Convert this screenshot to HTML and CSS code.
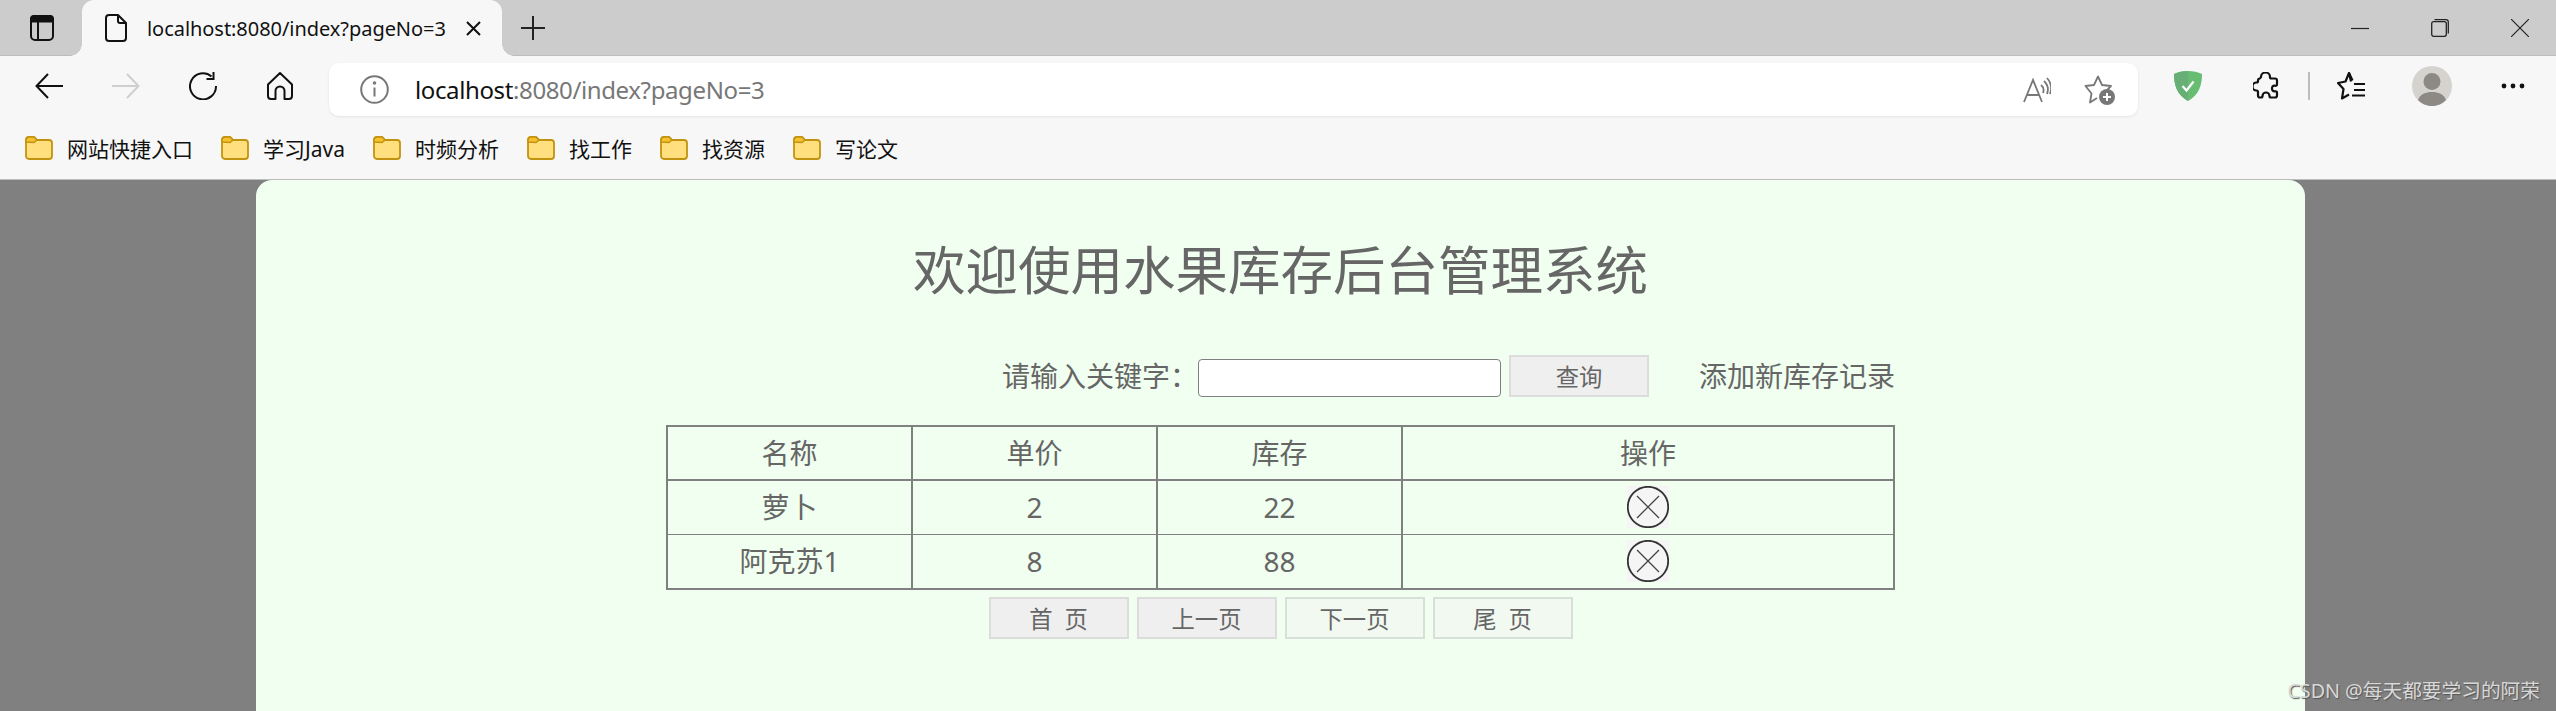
FILE: index.html
```html
<!DOCTYPE html>
<html lang="zh-CN">
<head>
<meta charset="utf-8">
<title>水果库存后台管理系统</title>
<link rel="stylesheet" href="styles.css">
</head>
<body>
<header class="tabstrip">
  <svg class="ic-sidebar" width="24" height="26" viewBox="0 0 24 26" fill="none" stroke="#111" stroke-width="2"><rect x="1" y="1" width="22" height="24" rx="4"/><path d="M1 6.500h22V4a3 3 0 0 0-3-3H4a3 3 0 0 0-3 3z" fill="#111"/><path d="M8 7v18"/></svg>
  <div class="tab">
    <svg class="ic-file" width="22" height="28" viewBox="0 0 22 28" fill="none" stroke="#111" stroke-width="2" stroke-linejoin="round"><path d="M4 1h9l8 8v15a3 3 0 0 1-3 3H4a3 3 0 0 1-3-3V4a3 3 0 0 1 3-3z"/><path d="M13 1v6a2 2 0 0 0 2 2h6"/></svg>
    <span class="tab-title">localhost:8080/index?pageNo=3</span>
    <svg class="ic-tabclose" width="15" height="15" viewBox="0 0 15 15" stroke="#111" stroke-width="2"><path d="M1 1l13 13M14 1L1 14"/></svg>
  </div>
  <svg class="ic-newtab" width="24" height="24" viewBox="0 0 24 24" stroke="#222" stroke-width="2"><path d="M12 0v24M0 12h24"/></svg>
  <div class="window-controls">
    <svg width="18" height="18" viewBox="0 0 18 18" stroke="#222" stroke-width="1.200"><path d="M0 9.500h18"/></svg>
    <svg width="18" height="18" viewBox="0 0 18 18" fill="none" stroke="#222" stroke-width="1.300"><rect x=".7" y="2.700" width="14.600" height="14.600" rx="2"/><path d="M3.500.7H15a2.300 2.300 0 0 1 2.300 2.300v11.500"/></svg>
    <svg width="18" height="18" viewBox="0 0 18 18" stroke="#222" stroke-width="1.200"><path d="M0 0l18 18M18 0L0 18"/></svg>
  </div>
</header>

<nav class="toolbar">
  <svg class="ic-back" width="28" height="26" viewBox="0 0 28 26" fill="none" stroke="#111" stroke-width="2"><path d="M28 13H2M13 1L1.500 13 13 25"/></svg>
  <svg class="ic-forward" width="28" height="26" viewBox="0 0 28 26" fill="none" stroke="#cfcfcf" stroke-width="2"><path d="M0 13h26M15 1l11.500 12L15 25"/></svg>
  <svg class="ic-reload" width="28" height="28" viewBox="0 0 28 28" fill="none" stroke="#111" stroke-width="2"><path d="M22.500 4.500A13 13 0 1 0 27 14"/><path d="M24.500 0v7h-7"/></svg>
  <svg class="ic-home" width="26" height="28" viewBox="0 0 26 28" fill="none" stroke="#111" stroke-width="2" stroke-linejoin="round"><path d="M13 1L1 12.500V24a3 3 0 0 0 3 3h4.500V19a4.500 4.500 0 0 1 9 0v8H22a3 3 0 0 0 3-3V12.500z"/></svg>
  <div class="addressbar">
    <svg class="ic-info" width="29" height="29" viewBox="0 0 29 29" fill="none" stroke="#777" stroke-width="2"><circle cx="14.500" cy="14.500" r="13.300"/><path d="M14.500 12.500v9"/><circle cx="14.500" cy="8" r=".8"/></svg>
    <span class="url"><span class="url-host">localhost</span>:8080/index?pageNo=3</span>
    <svg class="ic-read" width="28" height="26" viewBox="0 0 28 26" fill="none" stroke="#777" stroke-width="1.800"><path d="M1 25L10 3l9 22M4 18h12"/><path d="M18 8a7 7 0 0 1 2 8M21 4a12 12 0 0 1 3 13M24 1a16 16 0 0 1 3 16"/></svg>
    <svg class="ic-favadd" width="31" height="30" viewBox="0 0 31 30" fill="none" stroke="#777" stroke-width="1.800" stroke-linejoin="round"><path d="M23.500 14.500L27 11l-9-1-4-8.500L10 10l-8.500 1 6 7.500-1.500 9 7-4.500"/><circle cx="23" cy="22" r="8" fill="#777" stroke="none"/><path d="M23 18v8M19 22h8" stroke="#fff" stroke-width="2"/></svg>
  </div>
  <svg class="ic-shield" width="28" height="30" viewBox="0 0 28 30"><path d="M14 0c5 0 10 1 14 3 0 11-3 21-14 27C3 24 0 14 0 3c4-2 9-3 14-3z" fill="#67bd72"/><path d="M14 0C9 0 4 1 0 3c0 11 3 21 14 27z" fill="#68ae77"/><path d="M8.500 15l4 4.500 7-9" fill="none" stroke="#fff" stroke-width="2.200"/></svg>
  <svg class="ic-puzzle" width="26" height="29" viewBox="0 0 26 29" fill="none" stroke="#111" stroke-width="2.200" stroke-linejoin="round"><path d="M8 5a4.500 4.500 0 0 1 9 0c0 1 .5 1.500 1.500 1.500H22a2 2 0 0 1 2 2v4c0 1-1 1.500-2 1.200-2-.4-3 1-3 2.800s1 3 3 2.800c1-.2 2 .2 2 1.200v3a2 2 0 0 1-2 2h-4c-1 0-1.500-.6-1.500-1.500a3.500 3.500 0 0 0-7 0c0 1-.5 1.500-1.500 1.500H7a2 2 0 0 1-2-2v-3.500c0-1-.5-1.500-1.500-1.500a4 4 0 0 1 0-8c1 0 1.500-.5 1.500-1.500V8.500a2 2 0 0 1 2-2z"/></svg>
  <span class="toolbar-sep"></span>
  <svg class="ic-favs" width="28" height="28" viewBox="0 0 28 28" fill="none" stroke="#111" stroke-width="2.200" stroke-linejoin="round"><path d="M14 9.500L12 1 8.500 9.500 1 11l5.500 6L5 26.500l7-4"/><path d="M12 1l3.500 7.500M17 12h11M17 18h11M15 23.500h13"/></svg>
  <svg class="ic-avatar" width="40" height="40" viewBox="0 0 40 40"><circle cx="20" cy="20" r="20" fill="#d4d3cf"/><ellipse cx="20" cy="15.500" rx="8.500" ry="8.500" fill="#8d8984"/><path d="M6 34c2-6 8-8 14-8s12 2 14 8c-3.500 3.700-8.500 6-14 6S9.500 37.700 6 34z" fill="#8d8984"/></svg>
  <svg class="ic-more" width="24" height="6" viewBox="0 0 24 6" fill="#111"><circle cx="3" cy="3" r="2.400"/><circle cx="12" cy="3" r="2.400"/><circle cx="21" cy="3" r="2.400"/></svg>
</nav>

<nav class="bookmarks">
  <a class="bookmark bm-1"><svg class="folder" width="28" height="24" viewBox="0 0 28 24"><use href="#folder-shape"/></svg>网站快捷入口</a>
  <a class="bookmark bm-2"><svg class="folder" width="28" height="24" viewBox="0 0 28 24"><use href="#folder-shape"/></svg>学习Java</a>
  <a class="bookmark bm-3"><svg class="folder" width="28" height="24" viewBox="0 0 28 24"><use href="#folder-shape"/></svg>时频分析</a>
  <a class="bookmark bm-4"><svg class="folder" width="28" height="24" viewBox="0 0 28 24"><use href="#folder-shape"/></svg>找工作</a>
  <a class="bookmark bm-5"><svg class="folder" width="28" height="24" viewBox="0 0 28 24"><use href="#folder-shape"/></svg>找资源</a>
  <a class="bookmark bm-6"><svg class="folder" width="28" height="24" viewBox="0 0 28 24"><use href="#folder-shape"/></svg>写论文</a>
</nav>

<svg class="defs" width="0" height="0">
  <defs>
    <g id="folder-shape">
      <path d="M1 4a3 3 0 0 1 3-3h5l3 3h12a3 3 0 0 1 3 3v13a3 3 0 0 1-3 3H4a3 3 0 0 1-3-3z" fill="#ffdf7e" stroke="#c2930f" stroke-width="1.800"/>
      <path d="M1 6V4a3 3 0 0 1 3-3h5l3 3-3 2.500z" fill="#f4c02f" stroke="#c2930f" stroke-width="1.500"/>
    </g>
    <g id="delete-shape">
      <rect width="42" height="42" fill="#f4f5f4"/>
      <circle cx="21" cy="21" r="20.200" fill="none" stroke="#333" stroke-width="1.800"/>
      <path d="M10 10l22 22M32 10L10 32" stroke="#444" stroke-width="1.300"/>
    </g>
  </defs>
</svg>

<main class="page">
  <section class="card">
    <h1 class="title">欢迎使用水果库存后台管理系统</h1>
    <div class="content">
      <form class="search">
        <label class="search-label">请输入关键字：</label>
        <input class="search-input" type="text">
        <button class="btn btn-search" type="button">查询</button>
        <a class="add-link">添加新库存记录</a>
      </form>
      <table class="fruit-table">
        <colgroup><col class="col-n"><col class="col-n"><col class="col-n"><col></colgroup>
        <tr class="head-row"><th>名称</th><th>单价</th><th>库存</th><th>操作</th></tr>
        <tr class="row-first"><td>萝卜</td><td>2</td><td>22</td><td><svg class="ic-delete" width="42" height="42" viewBox="0 0 42 42"><use href="#delete-shape"/></svg></td></tr>
        <tr class="row-last"><td>阿克苏1</td><td>8</td><td>88</td><td><svg class="ic-delete" width="42" height="42" viewBox="0 0 42 42"><use href="#delete-shape"/></svg></td></tr>
      </table>
      <div class="pager">
        <button class="btn btn-page" type="button">首 页</button>
        <button class="btn btn-page" type="button">上一页</button>
        <button class="btn btn-page btn-light" type="button">下一页</button>
        <button class="btn btn-page btn-light" type="button">尾 页</button>
      </div>
    </div>
  </section>
  <span class="watermark">CSDN @每天都要学习的阿荣</span>
</main>
</body>
</html>
```
FILE: styles.css
```css
* { box-sizing: border-box; }
html, body { margin: 0; height: 711px; overflow: hidden; }
body {
  display: flex;
  flex-direction: column;
  background: #808080;
  font-family: "Noto Sans", "Noto Sans CJK SC", sans-serif;
}
svg { display: block; flex: none; }
.defs { position: absolute; }

/* tab strip */
.tabstrip {
  display: flex;
  align-items: center;
  height: 56px;
  background: #cccccc;
  box-shadow: inset 0 -1px 0 #bcbcbc;
}
.ic-sidebar { margin-left: 30px; }
.tab {
  position: relative;
  display: flex;
  align-items: center;
  align-self: flex-end;
  width: 420px;
  height: 56px;
  margin-left: 28px;
  padding-left: 23px;
  background: #f7f7f7;
  border-radius: 12px 12px 0 0;
}
.tab::before, .tab::after {
  content: "";
  position: absolute;
  bottom: 0;
  width: 12px;
  height: 12px;
}
.tab::before { left: -12px; background: radial-gradient(circle at 0 0, transparent 11.500px, #f7f7f7 12px); }
.tab::after { right: -12px; background: radial-gradient(circle at 100% 0, transparent 11.500px, #f7f7f7 12px); }
.tab-title { margin-left: 20px; width: 319px; font-size: 20px; letter-spacing: -.05px; color: #111; white-space: nowrap; }
.ic-newtab { margin-left: 19px; }
.window-controls {
  display: flex;
  gap: 62px;
  margin-left: auto;
  padding-right: 27px;
}

/* toolbar */
.toolbar {
  display: flex;
  align-items: center;
  height: 68px;
  padding-bottom: 8px;
  background: #f7f7f7;
}
.ic-back { margin-left: 35px; }
.ic-forward { margin-left: 49px; }
.ic-reload { margin-left: 49px; }
.ic-home { margin-left: 50px; }
.addressbar {
  display: flex;
  align-items: center;
  width: 1809px;
  height: 53px;
  margin: 7px 0 0 36px;
  padding-left: 31px;
  background: #fff;
  border-radius: 10px;
  box-shadow: 0 1px 3px rgba(0, 0, 0, .08);
}
.ic-info { margin-right: 26px; }
.url { width: 1608px; font-size: 24px; letter-spacing: -.38px; color: #777; white-space: nowrap; }
.url-host { color: #111; }
.ic-favadd { margin-left: 33px; }
.ic-shield { margin-left: 36px; }
.ic-puzzle { margin-left: 51px; }
.toolbar-sep { width: 2px; height: 28px; margin-left: 29px; background: #bdbdbd; }
.ic-favs { margin-left: 27px; }
.ic-avatar { margin-left: 47px; }
.ic-more { margin-left: 49px; }

/* bookmarks */
.bookmarks {
  display: flex;
  align-items: center;
  height: 56px;
  padding: 0 0 8px 25px;
  background: #f7f7f7;
  border-bottom: 1px solid #bdbdbd;
}
.bookmark {
  display: flex;
  align-items: center;
  gap: 14px;
  font-size: 21px;
  color: #111;
  white-space: nowrap;
}
.bm-1 { width: 196px; }
.bm-2 { width: 152px; }
.bm-3 { width: 154px; }
.bm-4 { width: 133px; }
.bm-5 { width: 133px; }

/* page */
.page { position: relative; flex: 1; min-height: 0; }
.card {
  height: 100%;
  width: 2049px;
  margin-left: 256px;
  padding-top: 55px;
  background: #f0fff0;
  border-radius: 16px 16px 0 0;
  color: #666;
}
.title {
  margin: 0;
  font-size: 52.500px;
  font-weight: 400;
  line-height: 70px;
  text-align: center;
}
.content { width: 1229px; margin: 50px 0 0 410px; }
.search {
  display: flex;
  align-items: flex-end;
  justify-content: flex-end;
  height: 42px;
  font-size: 28px;
}
.search-label { align-self: center; line-height: 44px; }
.search-input {
  width: 303px;
  height: 38px;
  margin: 0 8px 0 0;
  background: #fff;
  border: 1.500px solid #808080;
  border-radius: 4px;
}
.add-link { align-self: center; margin-left: 50px; line-height: 44px; }
.btn {
  width: 140px;
  height: 42px;
  padding: 0;
  background: #efefef;
  border: 2px solid #dcdcdc;
  font-family: inherit;
  font-size: 23.300px;
  color: #666;
}
.btn-light { background: #f1f9f1; border-color: #d8dfd8; }
.btn-page { word-spacing: 6px; }

.fruit-table {
  width: 1229px;
  height: 164px;
  margin-top: 28px;
  border: 2px solid #808080;
  border-collapse: collapse;
  table-layout: fixed;
  font-size: 28px;
}
.col-n { width: 245px; }
.fruit-table th, .fruit-table td {
  padding: 0;
  border: 2px solid #808080;
  font-weight: 400;
  text-align: center;
  line-height: 40px;
}
.fruit-table td { border-width: 1px 2px; }
.head-row th { height: 54px; }
.row-first td { height: 54px; }
.row-last td { height: 55px; }
.ic-delete { margin: 0 auto; }

.pager {
  display: flex;
  justify-content: center;
  gap: 8px;
  margin-top: 7px;
}

.watermark {
  position: absolute;
  right: 16px;
  bottom: 8px;
  font-size: 19.700px;
  line-height: 24px;
  color: #d8d8d8;
  text-shadow: 1px 1px 1px #555;
  white-space: nowrap;
}
```
